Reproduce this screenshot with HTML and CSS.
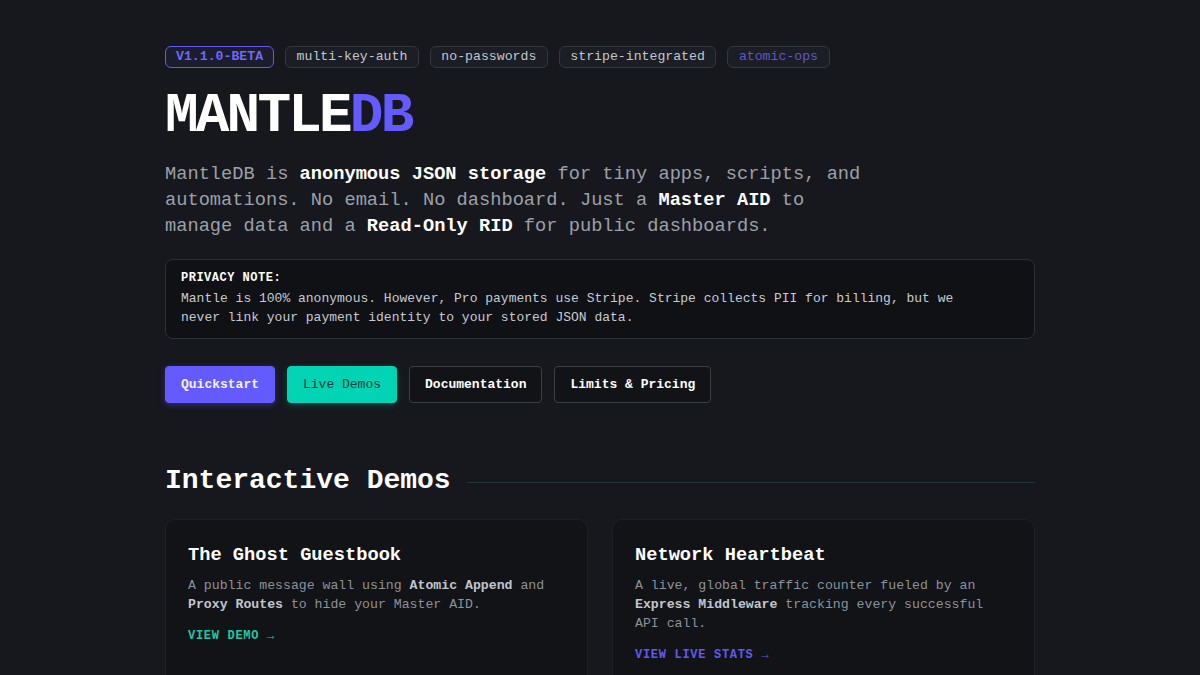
FILE: index.html
```html
<!DOCTYPE html>
<html lang="en">
<head>
<meta charset="utf-8">
<title>MantleDB</title>
<link rel="stylesheet" href="styles.css">
</head>
<body>
<main class="wrap">
  <div class="tags">
    <span class="tag tag-version">V1.1.0-BETA</span>
    <span class="tag">multi-key-auth</span>
    <span class="tag">no-passwords</span>
    <span class="tag">stripe-integrated</span>
    <span class="tag tag-accent">atomic-ops</span>
  </div>
  <h1 class="logo">MANTLE<span class="logo-db">DB</span></h1>
  <p class="lead">MantleDB is <strong>anonymous JSON storage</strong> for tiny apps, scripts, and automations. No email. No dashboard. Just a <strong>Master AID</strong> to manage data and a <strong>Read-Only RID</strong> for public dashboards.</p>
  <div class="note">
    <div class="note-label">PRIVACY NOTE:</div>
    <p class="note-text">Mantle is 100% anonymous. However, Pro payments use Stripe. Stripe collects PII for billing, but we never link your payment identity to your stored JSON data.</p>
  </div>
  <div class="actions">
    <a class="btn btn-primary" href="#">Quickstart</a>
    <a class="btn btn-teal" href="#">Live Demos</a>
    <a class="btn btn-outline" href="#">Documentation</a>
    <a class="btn btn-outline" href="#">Limits &amp; Pricing</a>
  </div>
  <div class="section-head">
    <h2 class="section-title">Interactive Demos</h2>
    <div class="section-rule"></div>
  </div>
  <div class="cards">
    <article class="card">
      <h3 class="card-title">The Ghost Guestbook</h3>
      <p class="card-text">A public message wall using <strong>Atomic Append</strong> and <strong>Proxy Routes</strong> to hide your Master AID.</p>
      <a class="card-link link-teal" href="#">VIEW DEMO →</a>
    </article>
    <article class="card">
      <h3 class="card-title">Network Heartbeat</h3>
      <p class="card-text">A live, global traffic counter fueled by an <strong>Express Middleware</strong> tracking every successful API call.</p>
      <a class="card-link link-purple" href="#">VIEW LIVE STATS →</a>
    </article>
  </div>
</main>
</body>
</html>
```
FILE: styles.css
```css
* { box-sizing: border-box; }
html, body { margin: 0; padding: 0; }
body {
  background: #16181d;
  color: #e8eaed;
  font-family: "Liberation Mono", "DejaVu Sans Mono", monospace;
  overflow: hidden;
}
.wrap {
  width: 870px;
  margin: 0 auto;
  padding-top: 46px;
}
.tags {
  display: flex;
  gap: 11px;
}
.tag {
  display: inline-block;
  font-size: 13.2px;
  line-height: 16px;
  padding: 2px 10.5px;
  border: 1px solid #33373e;
  border-radius: 6px;
  background: #1b1e24;
  color: #c3c7cd;
}
.tag-version {
  border-color: #6259f0;
  color: #7068ff;
  font-weight: bold;
  background: #1b1c2c;
  padding: 2px 10px;
}
.tag-accent { color: #5d56cf; }
.logo {
  margin: 20px 0 0;
  font-size: 56px;
  line-height: 56px;
  font-weight: bold;
  letter-spacing: -0.05em;
  color: #ffffff;
}
.logo-db { color: #635bff; }
.lead {
  margin: 17px 0 0;
  max-width: 705px;
  font-size: 18.7px;
  line-height: 26px;
  color: #9ca1a9;
}
.lead strong { color: #ffffff; }
.note {
  margin-top: 20px;
  border: 1px solid #2c3037;
  border-radius: 8px;
  background: #0f1114;
  padding: 10px 15px 11px;
}
.note-label {
  font-size: 12px;
  line-height: 16px;
  font-weight: bold;
  letter-spacing: 0.5px;
  color: #ffffff;
}
.note-text {
  margin: 3px 0 0;
  max-width: 790px;
  font-size: 13px;
  line-height: 19px;
  color: #c7cbd1;
}
.actions {
  display: flex;
  gap: 12px;
  margin-top: 27px;
}
.btn {
  display: inline-block;
  font-size: 13px;
  line-height: 19px;
  padding: 8px 15px;
  border: 1px solid transparent;
  border-radius: 4px;
  text-decoration: none;
  font-weight: bold;
}
.btn-primary {
  background: #635bff;
  border-color: #635bff;
  color: #f4f3ff;
  box-shadow: 0 2px 6px rgba(99, 91, 255, 0.35);
}
.btn-teal {
  background: #00d4b4;
  border-color: #00d4b4;
  color: #0b3b34;
  font-weight: normal;
  box-shadow: 0 2px 6px rgba(0, 212, 180, 0.25);
}
.btn-outline {
  background: #111317;
  border-color: #3a3e45;
  color: #ffffff;
}
.section-head {
  display: flex;
  align-items: center;
  gap: 16px;
  margin-top: 61px;
}
.section-title {
  margin: 0;
  font-size: 28px;
  line-height: 34px;
  font-weight: bold;
  color: #ffffff;
  white-space: nowrap;
}
.section-rule {
  flex: 1;
  height: 1px;
  background: #23353a;
  margin-top: 2px;
}
.cards {
  display: grid;
  grid-template-columns: 1fr 1fr;
  gap: 24px;
  margin-top: 21px;
}
.card {
  background: #111317;
  border: 1px solid #1d2026;
  border-radius: 10px;
  padding: 23px 22px 40px;
}
.card-title {
  margin: 0;
  font-size: 18.7px;
  line-height: 24px;
  font-weight: bold;
  color: #ffffff;
}
.card-text {
  margin: 8.5px 0 0;
  font-size: 13.2px;
  line-height: 19px;
  color: #8d9299;
}
.card-text strong { color: #c2c6cc; }
.card-link {
  display: inline-block;
  margin-top: 14.5px;
  font-size: 12px;
  line-height: 16px;
  font-weight: bold;
  letter-spacing: 0.7px;
  text-decoration: none;
}
.link-teal { color: #1ec9a8; }
.link-purple { color: #6259f0; }
```
